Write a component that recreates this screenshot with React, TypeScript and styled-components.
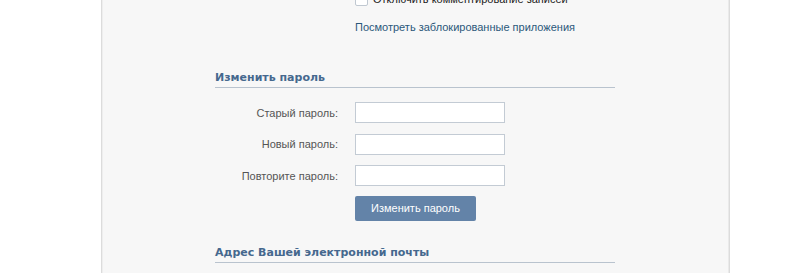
import styled, { createGlobalStyle } from 'styled-components'

const GlobalStyle = createGlobalStyle`
  body {
    margin: 0;
    background: #ffffff;
    font-family: 'Liberation Sans', Tahoma, sans-serif;
    font-size: 11px;
  }
`

const Page = styled.div`
  height: 280px;
  overflow: hidden;
  padding-left: 101px;
`

const Panel = styled.div`
  width: 627px;
  height: 100%;
  background: #f7f7f7;
  border-left: 1px solid #dcdcdc;
  border-right: 1px solid #dcdcdc;
  box-shadow: inset 1px 0 0 #eeeeee, inset -1px 0 0 #eaeaea;
`

const Content = styled.div`
  padding-left: 113px;
  width: 400px;
  margin-top: -7px;
`

const Options = styled.div`
  padding-left: 140px;
  display: flex;
  flex-direction: column;
  gap: 14px;
`

const CheckRow = styled.label`
  display: flex;
  align-items: center;
  gap: 5px;
  color: #222;
  line-height: 13px;
`

const Checkbox = styled.span`
  width: 11px;
  height: 11px;
  border: 1px solid #c0c8d1;
  background: #fff;
  border-radius: 2px;
`

const Link = styled.a`
  color: #2b587a;
  text-decoration: none;
  line-height: 14px;
`

const Section = styled.section<{ $top: number }>`
  margin-top: ${(p) => p.$top}px;
`

const SectionTitle = styled.h3`
  margin: 0;
  font-family: 'DejaVu Sans', Tahoma, sans-serif;
  font-size: 11px;
  font-weight: bold;
  color: #45688e;
  line-height: 14px;
  padding-bottom: 2px;
  border-bottom: 1px solid #b9c3ce;
`

const Form = styled.div`
  margin-top: 14px;
  display: grid;
  grid-template-columns: 123px 150px;
  column-gap: 17px;
  row-gap: 10.5px;
  align-items: center;
`

const Label = styled.span`
  text-align: right;
  color: #555;
`

const Input = styled.input`
  box-sizing: border-box;
  width: 150px;
  height: 21px;
  border: 1px solid #c3cbd4;
  background: #fff;
  margin: 0;
  padding: 2px 4px;
  font: inherit;
`

const Button = styled.button`
  grid-column: 2;
  justify-self: start;
  margin-top: -1px;
  height: 25px;
  padding: 0 16px;
  border: none;
  border-radius: 2px;
  background: #6383a8;
  color: #fff;
  font: inherit;
`

const fields = ['Старый пароль:', 'Новый пароль:', 'Повторите пароль:']

export default function App() {
  return (
    <>
      <GlobalStyle />
      <Page>
        <Panel>
          <Content>
            <Options>
              <CheckRow>
                <Checkbox />
                Отключить комментирование записей
              </CheckRow>
              <Link href="#">Посмотреть заблокированные приложения</Link>
            </Options>
            <Section $top={37}>
              <SectionTitle>Изменить пароль</SectionTitle>
              <Form>
                {fields.map((f) => (
                  <>
                    <Label key={f}>{f}</Label>
                    <Input type="password" />
                  </>
                ))}
                <Button>Изменить пароль</Button>
              </Form>
            </Section>
            <Section $top={25}>
              <SectionTitle>Адрес Вашей электронной почты</SectionTitle>
            </Section>
          </Content>
        </Panel>
      </Page>
    </>
  )
}
